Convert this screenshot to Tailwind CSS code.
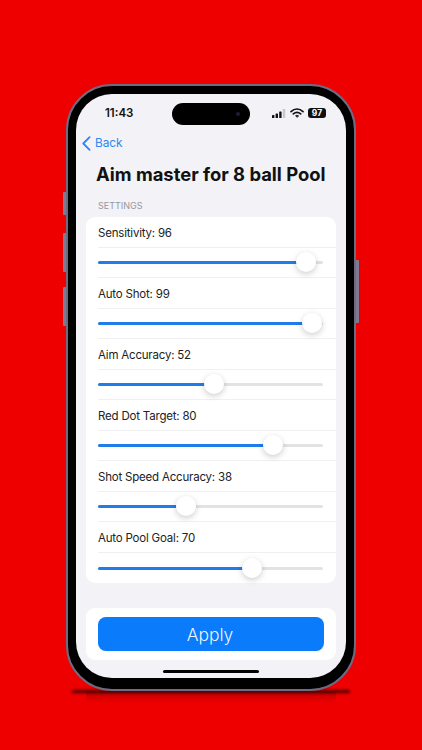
<!DOCTYPE html>
<html lang="en">
<head>
<meta charset="UTF-8">
<meta name="viewport" content="width=device-width, initial-scale=1.0">
<title>Aim master for 8 ball Pool</title>
<script src="https://cdn.jsdelivr.net/npm/@tailwindcss/browser@4"></script>
</head>
<body class="bg-[#ee0000] font-['Inter','Liberation_Sans',sans-serif]">
<div class="w-[422px] h-[750px] overflow-hidden pt-[84px] pl-[66px]">

  <!-- Phone -->
  <div class="relative w-[290px] h-[607px]">
    <!-- shadow under the phone -->
    <div class="absolute left-[20px] right-[20px] bottom-[-12px] h-[12px] bg-gradient-to-b from-black/20 to-transparent"></div>
    <div class="absolute left-[6px] right-[6px] bottom-[-2px] h-[3px] rounded-full bg-black/70 blur-[1.5px]"></div>
    <!-- side buttons -->
    <div class="absolute left-[-3px] top-[108px] w-[4px] h-[23px] rounded-l-[1px] bg-[#7d7a92]"></div>
    <div class="absolute left-[-3px] top-[149px] w-[4px] h-[39px] rounded-l-[1px] bg-[#7d7a92]"></div>
    <div class="absolute left-[-3px] top-[203px] w-[4px] h-[39px] rounded-l-[1px] bg-[#7d7a92]"></div>
    <div class="absolute right-[-3px] top-[176px] w-[4px] h-[63px] rounded-r-[1px] bg-[#7d7a92]"></div>

    <div class="relative w-full h-full rounded-[46px] bg-black border-[2px] border-[#6f6a80] pt-[8px] px-[8px] pb-[11px]">
      <div class="relative w-full h-full rounded-[36px] bg-[#f2f2f7] overflow-hidden">

        <!-- Status bar -->
        <div class="h-[36px] flex items-start justify-between pl-[29px] pr-[20px] pt-[12px]">
          <span class="text-[11.5px] leading-[14px] font-semibold text-[#111]">11:43</span>
          <div class="flex items-center gap-[4px] pt-[2px]">
            <svg width="14" height="9" viewBox="0 0 14 9"><rect x="0" y="6" width="2.4" height="3" rx=".6" fill="#111"/><rect x="3.6" y="4.4" width="2.4" height="4.6" rx=".6" fill="#111"/><rect x="7.2" y="2.4" width="2.4" height="6.6" rx=".6" fill="#111"/><rect x="10.8" y="0" width="2.4" height="9" rx=".6" fill="#c8c8cc"/></svg>
            <svg width="14" height="10" viewBox="0 0 14 10" fill="none" stroke="#111" stroke-width="1.7" stroke-linecap="round"><path d="M1 3.6C4.6.4 9.4.4 13 3.6"/><path d="M3.3 5.9C5.6 4 8.4 4 10.7 5.9"/><path d="M7 9.2 5.5 7.7C6.4 7.1 7.6 7.1 8.5 7.7Z" fill="#111" stroke-width=".6"/></svg>
            <span class="w-[18px] h-[10px] rounded-[3px] bg-[#111] text-white text-[8.5px] leading-[10px] font-bold text-center">97</span>
          </div>
        </div>

        <!-- Dynamic island -->
        <div class="absolute left-[96px] top-[9px] w-[78px] h-[22px] rounded-full bg-black flex items-center justify-end pr-[10px]">
          <span class="w-[4px] h-[4px] rounded-full bg-[#1c1c38]"></span>
        </div>

        <!-- Nav -->
        <div class="h-[26px] flex items-center gap-[3px] pl-[6px] text-[#2f86f0]">
          <svg width="9" height="15" viewBox="0 0 9 15" fill="none" stroke="#2f86f0" stroke-width="1.8" stroke-linecap="round" stroke-linejoin="round"><path d="M7.6 1.2 1.3 7.5l6.3 6.3"/></svg>
          <span class="text-[11.8px] leading-[16px] pl-[1px]">Back</span>
        </div>

        <h1 class="h-[34px] pl-[20px] pt-[5px] text-[18.4px] leading-[26px] font-bold text-[#111] whitespace-nowrap">Aim master for 8 ball Pool</h1>

        <p class="pl-[22px] pt-[10px] h-[27px] text-[9px] leading-[12px] text-[#97979d]">SETTINGS</p>

        <!-- Settings card -->
        <div class="mx-[10px] rounded-[9px] bg-white flex flex-col">
          <div class="h-[31px] flex items-center pt-[3px] ml-[12px] text-[11.5px] tracking-[-0.2px] text-[#222] border-b border-[#f0f0f2]">Sensitivity: 96</div>
          <div class="h-[30px] flex items-center ml-[12px] border-b border-[#f0f0f2]">
            <div class="relative w-[225px] h-[3px] rounded-full bg-[#e3e3e6]">
              <div class="h-full rounded-full bg-[#1f7cea] w-[208px]"></div>
              <div class="absolute left-[198px] top-[-9px] w-[20px] h-[20px] rounded-full bg-white shadow-[0_2px_6px_rgba(0,0,0,0.2)]"></div>
            </div>
          </div>
          <div class="h-[31px] flex items-center pt-[3px] ml-[12px] text-[11.5px] tracking-[-0.2px] text-[#222] border-b border-[#f0f0f2]">Auto Shot: 99</div>
          <div class="h-[30px] flex items-center ml-[12px] border-b border-[#f0f0f2]">
            <div class="relative w-[225px] h-[3px] rounded-full bg-[#e3e3e6]">
              <div class="h-full rounded-full bg-[#1f7cea] w-[214px]"></div>
              <div class="absolute left-[204px] top-[-9px] w-[20px] h-[20px] rounded-full bg-white shadow-[0_2px_6px_rgba(0,0,0,0.2)]"></div>
            </div>
          </div>
          <div class="h-[31px] flex items-center pt-[3px] ml-[12px] text-[11.5px] tracking-[-0.2px] text-[#222] border-b border-[#f0f0f2]">Aim Accuracy: 52</div>
          <div class="h-[30px] flex items-center ml-[12px] border-b border-[#f0f0f2]">
            <div class="relative w-[225px] h-[3px] rounded-full bg-[#e3e3e6]">
              <div class="h-full rounded-full bg-[#1f7cea] w-[116px]"></div>
              <div class="absolute left-[106px] top-[-9px] w-[20px] h-[20px] rounded-full bg-white shadow-[0_2px_6px_rgba(0,0,0,0.2)]"></div>
            </div>
          </div>
          <div class="h-[31px] flex items-center pt-[3px] ml-[12px] text-[11.5px] tracking-[-0.2px] text-[#222] border-b border-[#f0f0f2]">Red Dot Target: 80</div>
          <div class="h-[30px] flex items-center ml-[12px] border-b border-[#f0f0f2]">
            <div class="relative w-[225px] h-[3px] rounded-full bg-[#e3e3e6]">
              <div class="h-full rounded-full bg-[#1f7cea] w-[175px]"></div>
              <div class="absolute left-[165px] top-[-9px] w-[20px] h-[20px] rounded-full bg-white shadow-[0_2px_6px_rgba(0,0,0,0.2)]"></div>
            </div>
          </div>
          <div class="h-[31px] flex items-center pt-[3px] ml-[12px] text-[11.5px] tracking-[-0.2px] text-[#222] border-b border-[#f0f0f2]">Shot Speed Accuracy: 38</div>
          <div class="h-[30px] flex items-center ml-[12px] border-b border-[#f0f0f2]">
            <div class="relative w-[225px] h-[3px] rounded-full bg-[#e3e3e6]">
              <div class="h-full rounded-full bg-[#1f7cea] w-[88px]"></div>
              <div class="absolute left-[78px] top-[-9px] w-[20px] h-[20px] rounded-full bg-white shadow-[0_2px_6px_rgba(0,0,0,0.2)]"></div>
            </div>
          </div>
          <div class="h-[31px] flex items-center pt-[3px] ml-[12px] text-[11.5px] tracking-[-0.2px] text-[#222] border-b border-[#f0f0f2]">Auto Pool Goal: 70</div>
          <div class="h-[30px] flex items-center ml-[12px]">
            <div class="relative w-[225px] h-[3px] rounded-full bg-[#e3e3e6]">
              <div class="h-full rounded-full bg-[#1f7cea] w-[154px]"></div>
              <div class="absolute left-[144px] top-[-9px] w-[20px] h-[20px] rounded-full bg-white shadow-[0_2px_6px_rgba(0,0,0,0.2)]"></div>
            </div>
          </div>
        </div>

        <!-- Apply -->
        <div class="mx-[10px] mt-[25px] h-[52px] rounded-[9px] bg-white px-[12px] pt-[9px]">
          <button class="w-[226px] h-[34px] rounded-[8px] bg-[#0a7bfb] text-white/95 text-[17.5px] leading-[34px] font-light pt-[1px] pr-[2px]">Apply</button>
        </div>

        <!-- Home indicator -->
        <div class="absolute left-[87px] bottom-[5px] w-[96px] h-[3px] rounded-full bg-black"></div>
      </div>
    </div>
  </div>
</div>
</body>
</html>
